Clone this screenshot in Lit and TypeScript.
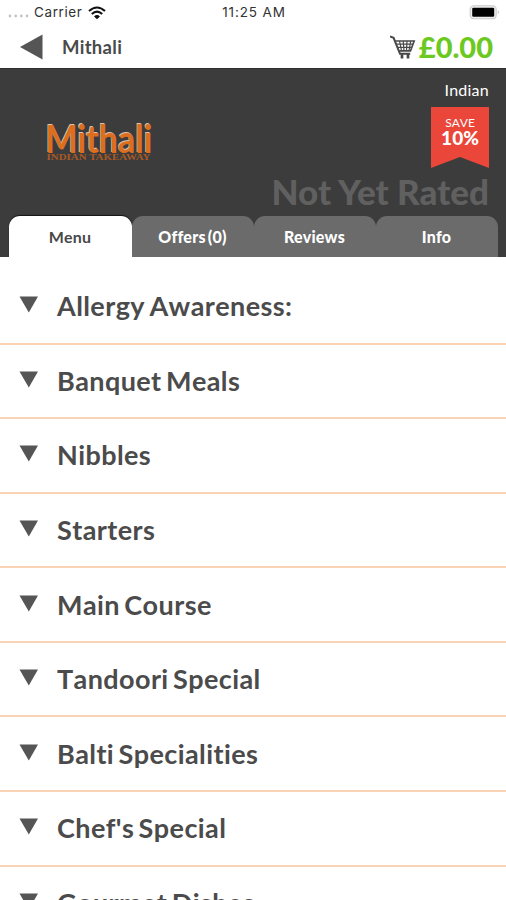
import { LitElement, html, css, svg } from "lit";
import { customElement, property } from "lit/decorators.js";

@customElement("status-bar")
class StatusBar extends LitElement {
  static styles = css`
    :host { display: grid; grid-template-columns: 1fr auto 1fr; align-items: center; height: 25px; padding: 0 6px 0 8px; font: 13.5px/25px Inter, sans-serif; color: #333; box-sizing: border-box; }
    .left { display: flex; align-items: center; }
    .dots { margin: 7px 5px 0 0; }
    .carrier { font-size: 13.5px; letter-spacing: 0.6px; }
    .wifi { margin-left: 6px; }
    .time { font-size: 13.5px; letter-spacing: 0.85px; }
    .battery { justify-self: end; }
    svg { display: block; }
  `;
  render() {
    return html`
      <div class="left">
        <svg class="dots" width="21" height="4" viewBox="0 0 21 4" fill="#c4c4c4">
          ${[2, 7.7, 13.3, 19].map((x) => svg`<circle cx=${x} cy="2" r="1.4"/>`)}
        </svg>
        <span class="carrier">Carrier</span>
        <svg class="wifi" width="18" height="14" viewBox="0 0 18 14">
          <path d="M1 5 Q9 -2 17 5 M3.8 8 Q9 3.4 14.2 8" fill="none" stroke="#111" stroke-width="2.1"/>
          <path d="M6 10.4 Q9 7.6 12 10.4 L9 13.2Z" fill="#111"/>
        </svg>
      </div>
      <span class="time">11:25 AM</span>
      <svg class="battery" width="31" height="15" viewBox="0 0 31 15">
        <rect x="1.2" y="0.8" width="26" height="13" rx="3.6" fill="#eee" stroke="#c9c9c9" stroke-width="1.1"/>
        <rect x="3.2" y="2.8" width="22" height="9" rx="1.2" fill="#000"/>
        <path d="M28.8 5.3 Q31 7.3 28.8 9.3Z" fill="#bbb"/>
      </svg>`;
  }
}

@customElement("basket-bar")
class BasketBar extends LitElement {
  static styles = css`
    :host { display: flex; align-items: center; height: 43px; padding: 0 13px 0 20px; font-family: Lato, sans-serif; color: #4a4a4a; box-sizing: border-box; }
    .title { margin-left: 19px; padding-top: 1px; font-size: 18.5px; letter-spacing: 0.3px; font-weight: 700; line-height: 42px; }
    .cart { margin: 1px 0 0 auto; }
    .total { margin-left: 3px; font-size: 29px; font-weight: 900; line-height: 43px; color: #6cc91f; }
    svg { display: block; }
  `;
  render() {
    return html`
      <svg width="23" height="26" viewBox="0 0 23 26"><path d="M0 13 L22.5 0.5 V25.5Z" fill="#555"/></svg>
      <span class="title">Mithali</span>
      <svg class="cart" width="26" height="25" viewBox="0 0 26 25" fill="none" stroke="#484848">
        <path d="M0 1.4 L3.6 2.8 L10 18.8 H20.2" stroke-width="2"/>
        <path d="M5.3 6 H24.2 L20.5 15.9 H9.2" stroke-width="1.6"/>
        <path d="M6.5 9.2 H23 M8 12.4 H21.8 M9.5 6 L11.5 15.5 M13.2 6 L14 15.5 M17 6 L16.5 15.5 M20.7 6 L19 15.5" stroke-width="1.2"/>
        <path d="M12 18.5 V23.5 M18 18.5 V23.5" stroke-width="2.7"/>
      </svg>
      <span class="total">£0.00</span>`;
  }
}

@customElement("restaurant-banner")
class RestaurantBanner extends LitElement {
  static styles = css`
    :host { display: flex; justify-content: space-between; height: 148px; padding: 0 17px 0 44px; background: #3c3c3c; border-top: 1px solid #303030; box-sizing: border-box; font-family: Lato, sans-serif; color: #fff; }
    .logo { display: block; margin-top: 39px; overflow: visible; }
    .name { font: 700 39px Lato, sans-serif; font-variant-ligatures: none; text-shadow: -1px -1px 0 #d9c3b3; }
    .tag { font: 700 8px "Liberation Serif", serif; }
    .side { display: flex; flex-direction: column; align-items: flex-end; }
    .cuisine { margin-top: 10px; font-size: 16px; line-height: 22px; letter-spacing: 0.25px; }
    .ribbon { display: flex; flex-direction: column; align-items: center; width: 58px; height: 61px; margin-top: 6px; padding-top: 8px; box-sizing: border-box; background: #ea4639; clip-path: polygon(0 0, 100% 0, 100% 100%, 50% 82%, 0 100%); }
    .save { font-size: 12px; line-height: 15px; font-kerning: none; }
    .percent { font-size: 19px; line-height: 16px; font-weight: 900; }
    .rating { margin-top: 2px; font-size: 35px; line-height: 42px; font-weight: 900; color: #606060; white-space: nowrap; }
  `;
  render() {
    return html`
      <svg class="logo" width="112" height="56" viewBox="0 -10 112 56">
        <text class="name" x="1.5" y="34.5" textLength="107" lengthAdjust="spacingAndGlyphs" fill="#dc6e1e">Mithali</text>
        <text class="tag" x="2.5" y="42" textLength="104" lengthAdjust="spacingAndGlyphs" fill="#a85a26">INDIAN TAKEAWAY</text>
      </svg>
      <div class="side">
        <span class="cuisine">Indian</span>
        <div class="ribbon"><span class="save">SAVE</span><span class="percent">10%</span></div>
        <span class="rating">Not Yet Rated</span>
      </div>`;
  }
}

@customElement("page-tabs")
class PageTabs extends LitElement {
  static styles = css`
    :host { display: grid; grid-template-columns: 123px 122px 122px 122px; height: 41px; padding: 0 8px 0 9px; background: #3c3c3c; font: 900 16px/41px Lato, sans-serif; color: #fff; box-sizing: border-box; }
    .tab { padding-right: 1px; text-align: center; background: #6b6b6c; border-radius: 11px 11px 0 0; letter-spacing: 0.25px; word-spacing: -2px; }
    .active { background: #fff; color: #484848; font-weight: 700; box-shadow: 0 -1px 1px #151515; }
  `;
  render() {
    return ["Menu", "Offers (0)", "Reviews", "Info"].map(
      (t, i) => html`<div class="tab ${i === 0 ? "active" : ""}">${t}</div>`
    );
  }
}

@customElement("menu-section")
class MenuSection extends LitElement {
  @property() label = "";
  static styles = css`
    :host { display: flex; align-items: center; height: 74.57px; padding: 0 20px 0 19px; border-bottom: 2px solid #fad2b4; box-sizing: border-box; font: 700 27px/34px Lato, sans-serif; font-kerning: none; font-variant-ligatures: none; letter-spacing: 0.4px; word-spacing: -2.5px; color: #4b4b4b; white-space: nowrap; }
    .arrow { display: block; margin: 0 18px 3px 0; }
  `;
  render() {
    return html`<svg class="arrow" width="20" height="17" viewBox="0 0 20 17"><path d="M0.5 0.5 H19 L9.8 16.5Z" fill="#555"/></svg><span>${this.label}</span>`;
  }
}

@customElement("app-root")
class AppRoot extends LitElement {
  static styles = css`
    :host { display: block; height: 900px; overflow: hidden; background: #fff; }
    .list { padding-top: 13px; }
  `;
  sections = ["Allergy Awareness:", "Banquet Meals", "Nibbles", "Starters", "Main Course", "Tandoori Special", "Balti Specialities", "Chef's Special", "Gourmet Dishes"];
  render() {
    return html`
      <status-bar></status-bar>
      <basket-bar></basket-bar>
      <restaurant-banner></restaurant-banner>
      <page-tabs></page-tabs>
      <div class="list">${this.sections.map((s) => html`<menu-section .label=${s}></menu-section>`)}</div>`;
  }
}
